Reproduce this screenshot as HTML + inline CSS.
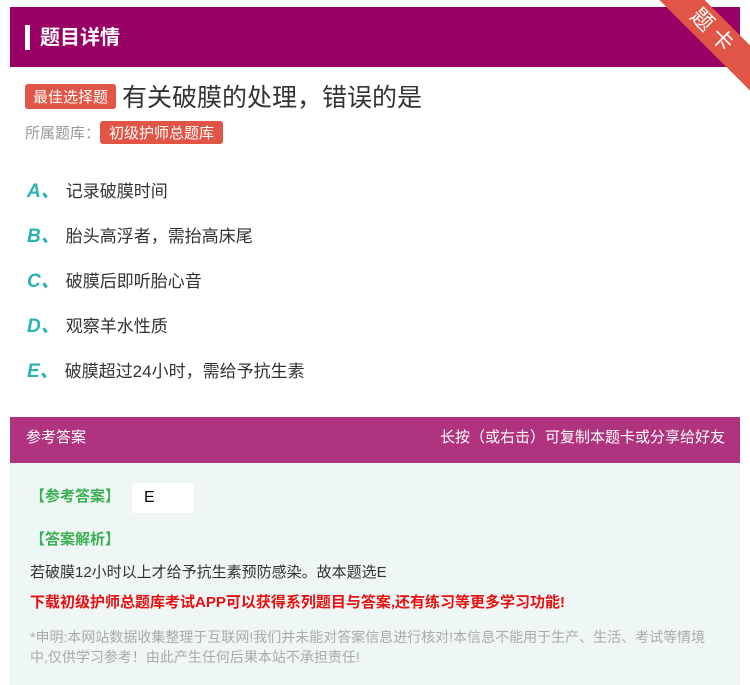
<!DOCTYPE html>
<html><head><meta charset="utf-8"><style>
body{margin:0;width:750px;height:685px;background:#fff;font-family:"Liberation Sans","Noto Sans CJK SC",sans-serif;position:relative;overflow:hidden}
.hdr{position:absolute;left:10px;top:7px;width:730px;height:60px;background:#990066}
.hdr .bar{position:absolute;left:15px;top:18px;width:5px;height:25px;background:#fff}
.hdr .t{position:absolute;left:30px;top:14px;color:#fff;font-size:20px;font-weight:bold}
.rib{position:absolute;right:-34px;top:16px;width:140px;height:32px;background:#e05545;transform:rotate(45deg);color:#fff;text-align:center;font-size:22px;line-height:32px;letter-spacing:6px}
.tag{display:inline-block;background:#e05545;color:#fff;border-radius:3px}
.q{position:absolute;left:25px;top:78px;font-size:25px;color:#333}
.q .tag{font-size:15px;padding:2px 8px;vertical-align:4px;margin-right:6px}
.lib{position:absolute;left:25px;top:121px;font-size:15px;color:#999}
.lib .tag{font-size:15px;padding:1px 9px}
.opt{position:absolute;left:27px;font-size:17px;color:#333}
.opt b{color:#2ab3b3;font-style:italic;font-size:19px;margin-right:6px}
.ah{position:absolute;left:10px;top:417px;width:730px;height:46px;background:#b0337f;color:#fff;font-size:15px;line-height:42px}
.ab{position:absolute;left:10px;top:463px;width:730px;height:222px;background:#eef7f6}
.g{color:#3bb050;font-size:15px;font-weight:bold;position:absolute}
</style></head><body>
<div class="hdr"><div class="bar"></div><div class="t">题目详情</div></div>
<div class="rib">题卡</div>
<div class="q"><span class="tag">最佳选择题</span>有关破膜的处理，错误的是</div>
<div class="lib">所属题库：<span class="tag">初级护师总题库</span></div>
<div class="opt" style="top:176px"><b>A、</b>记录破膜时间</div>
<div class="opt" style="top:221px"><b>B、</b>胎头高浮者，需抬高床尾</div>
<div class="opt" style="top:266px"><b>C、</b>破膜后即听胎心音</div>
<div class="opt" style="top:311px"><b>D、</b>观察羊水性质</div>
<div class="opt" style="top:356px"><b>E、</b>破膜超过24小时，需给予抗生素</div>
<div class="ah"><span style="position:absolute;left:16px">参考答案</span><span style="position:absolute;right:15px">长按（或右击）可复制本题卡或分享给好友</span></div>
<div class="ab">
<div class="g" style="left:20px;top:22px">【参考答案】</div>
<div style="position:absolute;left:122px;top:20px;width:62px;height:30px;background:#fff;font-size:16px;padding-left:12px;line-height:30px;box-sizing:border-box">E</div>
<div class="g" style="left:20px;top:65px">【答案解析】</div>
<div style="position:absolute;left:20px;top:98px;font-size:15px;color:#333">若破膜12小时以上才给予抗生素预防感染。故本题选E</div>
<div style="position:absolute;left:20px;top:128px;font-size:15px;color:#e81010;font-weight:bold">下载初级护师总题库考试APP可以获得系列题目与答案,还有练习等更多学习功能!</div>
<div style="position:absolute;left:20px;top:164px;width:682px;font-size:14px;line-height:20px;color:#aaa">*申明:本网站数据收集整理于互联网!我们并未能对答案信息进行核对!本信息不能用于生产、生活、考试等情境中,仅供学习参考！由此产生任何后果本站不承担责任!</div>
</div>
</body></html>
